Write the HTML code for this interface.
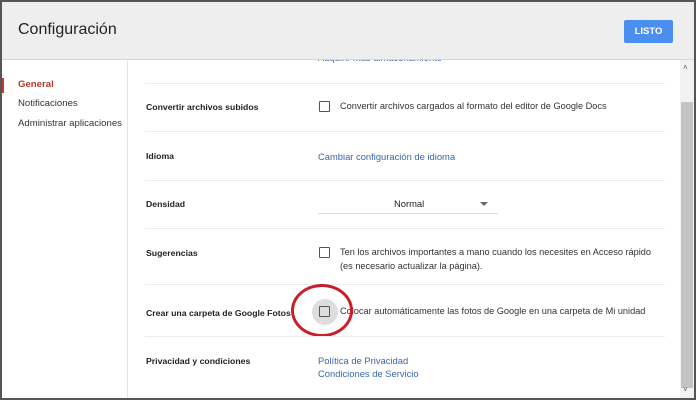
<!DOCTYPE html>
<html><head><style>
body{margin:0;width:696px;height:400px;overflow:hidden;font-family:"Liberation Sans",sans-serif;background:#fff;position:relative}
.frame{position:absolute;left:0;top:0;width:692px;height:396px;border:2px solid #555;z-index:5;pointer-events:none}
.hdr{position:absolute;left:2px;top:2px;width:692px;height:57px;background:#eeeeee;border-bottom:1px solid #d6d6d6;z-index:3}
.hdr .t{position:absolute;left:16px;top:19px;font-size:16px;color:#222}
.btn{position:absolute;left:622px;top:18px;width:49px;height:23px;background:#4a8ef0;color:#fff;font-size:9.5px;font-weight:bold;text-align:center;line-height:23px;border-radius:2px}
.side{position:absolute;left:0;top:60px;width:127px;height:338px;border-right:1px solid #e5e5e5}
.side div{position:absolute;left:18px;font-size:9.6px;color:#333;white-space:nowrap}
.bar{position:absolute;left:0;top:78px;width:4px;height:15px;background:#c0392b}
.sb{position:absolute;left:680px;top:60px;width:14px;height:338px;background:#f2f2f2}
.thumb{position:absolute;left:681px;top:102px;width:12px;height:286px;background:#c4c4c4}
.sep{position:absolute;left:145px;width:520px;height:1px;background:#ececec}
.lbl{position:absolute;left:146px;font-size:8.7px;font-weight:bold;color:#222;white-space:nowrap}
.txt{position:absolute;left:340px;font-size:9.2px;color:#333;line-height:13.5px;white-space:nowrap}
.lnk{position:absolute;left:318px;font-size:9.4px;color:#3a66a8;line-height:13px;white-space:nowrap}
.cb{position:absolute;left:319px;width:9px;height:9px;border:1.5px solid #555;border-radius:1px}
</style></head><body>
<div class="frame"></div>
<div class="hdr"><div class="t">Configuración</div><div class="btn">LISTO</div></div>
<div class="side">
<div style="top:19px;color:#b03a2e;font-weight:bold">General</div>
<div style="top:38px">Notificaciones</div>
<div style="top:58px">Administrar aplicaciones</div>
</div>
<div class="bar"></div>
<div class="sb"></div><div class="thumb"></div>
<div style="position:absolute;left:683px;top:63px;font-size:8px;color:#555">˄</div>
<div style="position:absolute;left:683px;top:385px;font-size:8px;color:#555">˅</div>
<div class="lnk" style="top:51px">Adquirir más almacenamiento</div>
<div class="sep" style="top:83px"></div>
<div class="lbl" style="top:102px">Convertir archivos subidos</div>
<div class="cb" style="top:101px"></div>
<div class="txt" style="top:100px">Convertir archivos cargados al formato del editor de Google Docs</div>
<div class="sep" style="top:131px"></div>
<div class="lbl" style="top:151px">Idioma</div>
<div class="lnk" style="top:150px">Cambiar configuración de idioma</div>
<div class="sep" style="top:180px"></div>
<div class="lbl" style="top:199px">Densidad</div>
<div style="position:absolute;left:394px;top:198px;font-size:9.4px;color:#222">Normal</div>
<div style="position:absolute;left:480px;top:202px;width:0;height:0;border-left:4px solid transparent;border-right:4px solid transparent;border-top:4px solid #666"></div>
<div style="position:absolute;left:318px;top:213px;width:180px;height:1px;background:#ddd"></div>
<div class="sep" style="top:228px"></div>
<div class="lbl" style="top:248px">Sugerencias</div>
<div class="cb" style="top:247px"></div>
<div class="txt" style="top:246px">Ten los archivos importantes a mano cuando los necesites en Acceso rápido<br>(es necesario actualizar la página).</div>
<div class="sep" style="top:284px"></div>
<div class="lbl" style="top:308px">Crear una carpeta de Google Fotos</div>
<div style="position:absolute;left:312px;top:299px;width:26px;height:26px;border-radius:50%;background:#ddd"></div>
<div class="cb" style="top:306px;left:319px"></div>
<div class="txt" style="top:305px">Colocar automáticamente las fotos de Google en una carpeta de Mi unidad</div>
<div style="position:absolute;left:291px;top:284px;width:62px;height:53px;border:3px solid #c8202a;border-radius:50%;box-sizing:border-box"></div>
<div class="sep" style="top:336px"></div>
<div class="lbl" style="top:356px">Privacidad y condiciones</div>
<div class="lnk" style="top:354px">Política de Privacidad<br>Condiciones de Servicio</div>
</body></html>
